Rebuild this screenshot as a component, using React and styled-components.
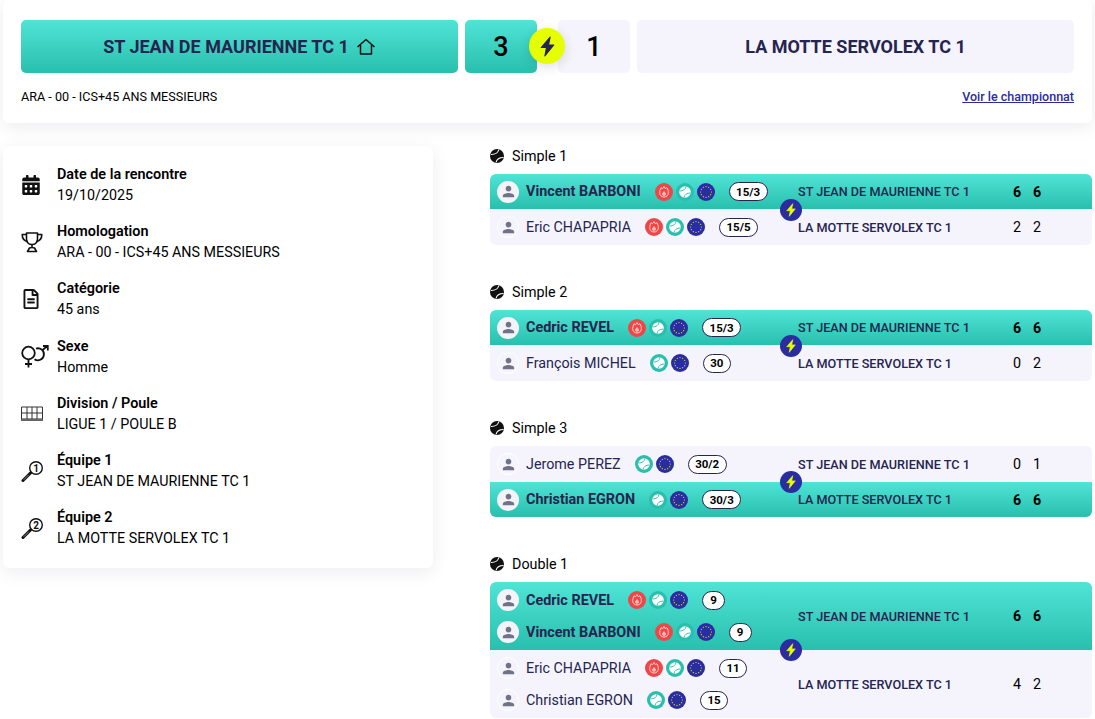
import React from "react"
import styled, { createGlobalStyle } from "styled-components"
import { FaCalendarAlt, FaRegFileAlt } from "react-icons/fa"
import { MdPerson } from "react-icons/md"

const GlobalStyle = createGlobalStyle`
  html, body {
    margin: 0;
    padding: 0;
    height: 719px;
    overflow: hidden;
    background: #fff;
    font-family: Roboto, "Liberation Sans", sans-serif;
    color: #000;
  }
  * { box-sizing: border-box; }
`

const TEAL = "linear-gradient(180deg, #4fe4d6 0%, #29bfad 100%)"
const LAVENDER = "#f5f4fc"
const INK = "#25254f"
const NAVY = "#2a2da0"

const Page = styled.div`
  width: 1095px;
  padding: 0 3px;
`

const Header = styled.header`
  height: 123px;
  padding: 20px 18px 0;
  background: #fff;
  border-radius: 6px;
  box-shadow: 0 4px 18px rgba(30, 30, 70, 0.08);
`

const ScoreBoard = styled.div`
  display: flex;
  height: 53px;
`

const TeamBox = styled.div`
  flex: 1;
  display: flex;
  align-items: center;
  justify-content: center;
  gap: 7px;
  border-radius: 5px;
  font-size: 18px;
  font-weight: 700;
  color: ${INK};
  background: ${(p) => (p.$won ? TEAL : LAVENDER)};
`

const ScoreBox = styled.div`
  width: 72px;
  display: flex;
  align-items: center;
  justify-content: center;
  border-radius: 5px;
  font-size: 27px;
  font-weight: 500;
  background: ${(p) => (p.$won ? TEAL : LAVENDER)};
  margin: ${(p) => (p.$won ? "0 0 0 7px" : "0 7px 0 0")};
`

const BoltGap = styled.div`
  position: relative;
  width: 21px;
`

const BigBolt = styled.div`
  position: absolute;
  left: -8px;
  top: 8px;
  width: 36px;
  height: 36px;
  display: flex;
  align-items: center;
  justify-content: center;
  border-radius: 50%;
  background: #e6ff00;
  color: ${INK};
  box-shadow: 0 3px 12px rgba(30, 30, 70, 0.14);
`

const MetaRow = styled.div`
  display: flex;
  justify-content: space-between;
  align-items: center;
  margin-top: 16px;
  font-size: 12.6px;
`

const ChampLink = styled.a`
  font-size: 12.5px;
  font-weight: 500;
  color: ${NAVY};
  text-decoration: underline;
`

const Columns = styled.div`
  display: grid;
  grid-template-columns: 430px 602px;
  justify-content: space-between;
  align-items: start;
  margin-top: 23px;
`

const InfoCard = styled.aside`
  display: flex;
  flex-direction: column;
  gap: 15.2px;
  padding: 18px 18px 19px;
  background: #fff;
  border-radius: 6px;
  box-shadow: 0 4px 18px rgba(30, 30, 70, 0.08);
`

const InfoRow = styled.div`
  display: flex;
  align-items: center;
`

const InfoIcon = styled.div`
  width: 36px;
  flex: none;
  display: flex;
  align-items: center;
`

const InfoLabel = styled.div`
  font-size: 14.4px;
  font-weight: 600;
  line-height: 21px;
`

const InfoValue = styled.div`
  font-size: 14.3px;
  line-height: 21px;
`

const Matches = styled.main`
  display: flex;
  flex-direction: column;
  gap: 37px;
`

const MatchTitle = styled.div`
  display: flex;
  align-items: center;
  gap: 8px;
  height: 20px;
  margin-bottom: 8px;
  font-size: 14.3px;
`

const MatchBlock = styled.div`
  position: relative;
  border-radius: 6px;
`

const Side = styled.div`
  display: flex;
  align-items: center;
  padding-left: 7px;
  background: ${(p) => (p.$won ? TEAL : LAVENDER)};
  border-radius: ${(p) => (p.$first ? "6px 6px 0 0" : "0 0 6px 6px")};
`

const Players = styled.div`
  width: 301px;
  flex: none;
  display: flex;
  flex-direction: column;
  padding: ${(p) => (p.$double ? "2px 0" : "0")};
`

const PlayerRow = styled.div`
  display: flex;
  align-items: center;
  height: ${(p) => (p.$double ? "32px" : p.$won ? "35px" : "36px")};
`

const Avatar = styled.div`
  width: 22px;
  height: 22px;
  flex: none;
  display: flex;
  align-items: center;
  justify-content: center;
  margin-right: 7px;
  border-radius: 50%;
  color: #6f7288;
  background: ${(p) => (p.$won ? "#f4f4f8" : "#f5f4fc")};
  border: ${(p) => (p.$won ? "none" : "1px solid #fff")};
`

const PlayerName = styled.span`
  font-size: ${(p) => (p.$won ? "14.4px" : "14.3px")};
  font-weight: ${(p) => (p.$won ? 700 : 400)};
  color: ${INK};
  white-space: nowrap;
`

const Badges = styled.div`
  display: flex;
  gap: 3px;
  margin: 0 14px;
`

const Rank = styled.span`
  min-width: 23px;
  height: 19px;
  padding: 0 6.5px;
  display: flex;
  align-items: center;
  justify-content: center;
  border-radius: 10px;
  border: 1px solid ${INK};
  background: #fff;
  font-size: 11.5px;
  font-weight: 700;
  white-space: nowrap;
`

const TeamName = styled.div`
  width: 209px;
  flex: none;
  font-size: 12.65px;
  font-weight: 500;
  color: ${INK};
  white-space: nowrap;
`

const SetScore = styled.div`
  width: 20px;
  text-align: center;
  font-size: 14.3px;
  font-weight: ${(p) => (p.$won ? 700 : 400)};
`

const MatchBolt = styled.div`
  position: absolute;
  left: 290px;
  top: 50%;
  width: 22px;
  height: 22px;
  margin-top: -11px;
  display: flex;
  align-items: center;
  justify-content: center;
  border-radius: 50%;
  background: ${NAVY};
  color: #e6ff00;
`

const BoltIcon = ({ size }) => (
  <svg width={size} height={size} viewBox="0 0 20 20" fill="currentColor" stroke="currentColor" strokeWidth="1" strokeLinejoin="round">
    <path d="M12.5 1 L4 11 H9 L7.5 19 L16 8.5 H11 Z" />
  </svg>
)

const HomeIcon = () => (
  <svg width="20" height="20" viewBox="0 0 20 20" fill="none" stroke="#111" strokeWidth="1.5" strokeLinejoin="round">
    <path d="M1.5 10 L10 2.5 L18.5 10 M4.5 8 V17 H15.5 V8" />
  </svg>
)

const TrophyIcon = () => (
  <svg width="22" height="22" viewBox="0 0 22 22" fill="none" stroke="#111" strokeWidth="1.6" strokeLinejoin="round">
    <path d="M5.5 2 H16.5 V8 C16.5 11.5 13.8 13.5 11 13.5 C8.2 13.5 5.5 11.5 5.5 8 Z" />
    <path d="M5.5 3.5 H1.2 C1.2 8 3 10 7 10.8 M16.5 3.5 H20.8 C20.8 8 19 10 15 10.8" />
    <path d="M11 13.5 V17 M8.5 17 C9.5 16.5 12.5 16.5 13.5 17 L15.5 20.5 H6.5 Z" />
  </svg>
)

const GenderIcon = () => (
  <svg width="28" height="24" viewBox="0 0 28 24" fill="none" stroke="#111" strokeWidth="1.8">
    <circle cx="7.5" cy="8" r="6.3" />
    <path d="M7.5 14.5 V22.5 M4 19 H11" />
    <path d="M15 3.6 A6 6 0 1 1 13.5 14.2" />
    <path d="M21.5 5 L26.5 1 M22 1 H26.8 V5.5" />
  </svg>
)

const NetIcon = () => (
  <svg width="22" height="17" viewBox="0 0 22 17" fill="none" stroke="#333" strokeWidth="1">
    <path d="M0.5 2 H21.5 V14 H0.5 Z M0.5 8 H21.5 M6 2 V14 M11 2 V14 M16 2 V14" />
    <path d="M0 15 H22" strokeWidth="2" stroke="#666" />
  </svg>
)

const RacketIcon = ({ n }) => (
  <svg width="22" height="24" viewBox="0 0 22 24" fill="none" stroke="#111">
    <circle cx="15" cy="9" r="6.3" strokeWidth="1.4" />
    <path d="M9.5 14 L2 21.5" strokeWidth="3" strokeLinecap="round" />
    <path d="M7.5 16 L3 20.5" strokeWidth="0.7" stroke="#bbb" strokeLinecap="round" />
    <text x="15" y="12.5" fontSize="10" fontWeight="700" textAnchor="middle" fill="#111" stroke="none" fontFamily="Roboto">{n}</text>
  </svg>
)

const BallIcon = () => (
  <svg width="14" height="14" viewBox="0 0 14 14">
    <circle cx="7" cy="7" r="7" fill="#111" />
    <path d="M1 5.5 C5 5.5 8 4 8.8 0.5 M13.5 8.5 C10 8.5 6.8 10 6 13.5" stroke="#fff" strokeWidth="1.1" fill="none" />
  </svg>
)

const FlameBadge = () => (
  <svg width="18" height="18" viewBox="0 0 18 18">
    <circle cx="9" cy="9" r="9" fill="#ef4646" />
    <path d="M9 3.5 L10 5.5 L12 4.8 C13 6.5 13.3 8 13.3 9.8 C13.3 12.4 11.4 14 9 14 C6.6 14 4.7 12.4 4.7 9.8 C4.7 8 5.2 6.5 6 4.8 L7.6 5.7 Z" fill="none" stroke="#ffd0d0" strokeWidth="1" />
    <path d="M9 8 C10.4 9.4 11 10.2 11 11 C11 12.2 10 12.8 9 12.8 C8 12.8 7 12.2 7 11 C7 10 8 9.6 9 8 Z" fill="#ffb8b8" />
  </svg>
)

const TennisBadge = () => (
  <svg width="18" height="18" viewBox="0 0 18 18">
    <circle cx="9" cy="9" r="9" fill="#28bfad" />
    <circle cx="9" cy="9" r="5.8" fill="#fff" />
    <path d="M3.6 8 C7 8 9.6 6.5 10 3.4 M14.4 10 C11 10 8.4 11.5 8 14.6" stroke="#28bfad" strokeWidth="0.9" fill="none" />
  </svg>
)

const EuBadge = () => (
  <svg width="18" height="18" viewBox="0 0 18 18">
    <circle cx="9" cy="9" r="9" fill={NAVY} />
    {Array.from({ length: 12 }).map((_, i) => {
      const a = (i * Math.PI) / 6
      return <circle key={i} cx={9 + 5.4 * Math.cos(a)} cy={9 + 5.4 * Math.sin(a)} r="0.6" fill="#e6e23a" />
    })}
  </svg>
)

const infos = [
  { label: "Date de la rencontre", value: "19/10/2025", icon: <FaCalendarAlt size={20} color="#111" /> },
  { label: "Homologation", value: "ARA - 00 - ICS+45 ANS MESSIEURS", icon: <TrophyIcon /> },
  { label: "Catégorie", value: "45 ans", icon: <FaRegFileAlt size={20} color="#111" /> },
  { label: "Sexe", value: "Homme", icon: <GenderIcon /> },
  { label: "Division / Poule", value: "LIGUE 1 / POULE B", icon: <NetIcon /> },
  { label: "Équipe 1", value: "ST JEAN DE MAURIENNE TC 1", icon: <RacketIcon n="1" /> },
  { label: "Équipe 2", value: "LA MOTTE SERVOLEX TC 1", icon: <RacketIcon n="2" /> },
]

const HOME = "ST JEAN DE MAURIENNE TC 1"
const AWAY = "LA MOTTE SERVOLEX TC 1"

const matches = [
  {
    title: "Simple 1",
    sides: [
      { won: true, team: HOME, sets: [6, 6], players: [{ name: "Vincent BARBONI", flame: true, rank: "15/3" }] },
      { team: AWAY, sets: [2, 2], players: [{ name: "Eric CHAPAPRIA", flame: true, rank: "15/5" }] },
    ],
  },
  {
    title: "Simple 2",
    sides: [
      { won: true, team: HOME, sets: [6, 6], players: [{ name: "Cedric REVEL", flame: true, rank: "15/3" }] },
      { team: AWAY, sets: [0, 2], players: [{ name: "François MICHEL", rank: "30" }] },
    ],
  },
  {
    title: "Simple 3",
    sides: [
      { team: HOME, sets: [0, 1], players: [{ name: "Jerome PEREZ", rank: "30/2" }] },
      { won: true, team: AWAY, sets: [6, 6], players: [{ name: "Christian EGRON", rank: "30/3" }] },
    ],
  },
  {
    title: "Double 1",
    sides: [
      {
        won: true,
        team: HOME,
        sets: [6, 6],
        players: [
          { name: "Cedric REVEL", flame: true, rank: "9" },
          { name: "Vincent BARBONI", flame: true, rank: "9" },
        ],
      },
      {
        team: AWAY,
        sets: [4, 2],
        players: [
          { name: "Eric CHAPAPRIA", flame: true, rank: "11" },
          { name: "Christian EGRON", rank: "15" },
        ],
      },
    ],
  },
]

function MatchCard({ match }) {
  const double = match.sides[0].players.length > 1
  return (
    <section>
      <MatchTitle>
        <BallIcon />
        {match.title}
      </MatchTitle>
      <MatchBlock>
        {match.sides.map((side, i) => (
          <Side key={i} $won={side.won} $first={i === 0}>
            <Players $double={double}>
              {side.players.map((player) => (
                <PlayerRow key={player.name} $double={double} $won={side.won}>
                  <Avatar $won={side.won}>
                    <MdPerson size={17} />
                  </Avatar>
                  <PlayerName $won={side.won}>{player.name}</PlayerName>
                  <Badges>
                    {player.flame && <FlameBadge />}
                    <TennisBadge />
                    <EuBadge />
                  </Badges>
                  <Rank>{player.rank}</Rank>
                </PlayerRow>
              ))}
            </Players>
            <TeamName>{side.team}</TeamName>
            {side.sets.map((set, j) => (
              <SetScore key={j} $won={side.won}>{set}</SetScore>
            ))}
          </Side>
        ))}
        <MatchBolt>
          <BoltIcon size={14} />
        </MatchBolt>
      </MatchBlock>
    </section>
  )
}

export default function App() {
  return (
    <Page>
      <GlobalStyle />
      <Header>
        <ScoreBoard>
          <TeamBox $won>
            {HOME}
            <HomeIcon />
          </TeamBox>
          <ScoreBox $won>3</ScoreBox>
          <BoltGap>
            <BigBolt>
              <BoltIcon size={21} />
            </BigBolt>
          </BoltGap>
          <ScoreBox>1</ScoreBox>
          <TeamBox>{AWAY}</TeamBox>
        </ScoreBoard>
        <MetaRow>
          <span>ARA - 00 - ICS+45 ANS MESSIEURS</span>
          <ChampLink href="#">Voir le championnat</ChampLink>
        </MetaRow>
      </Header>
      <Columns>
        <InfoCard>
          {infos.map((info) => (
            <InfoRow key={info.label}>
              <InfoIcon>{info.icon}</InfoIcon>
              <div>
                <InfoLabel>{info.label}</InfoLabel>
                <InfoValue>{info.value}</InfoValue>
              </div>
            </InfoRow>
          ))}
        </InfoCard>
        <Matches>
          {matches.map((match) => (
            <MatchCard key={match.title} match={match} />
          ))}
        </Matches>
      </Columns>
    </Page>
  )
}
